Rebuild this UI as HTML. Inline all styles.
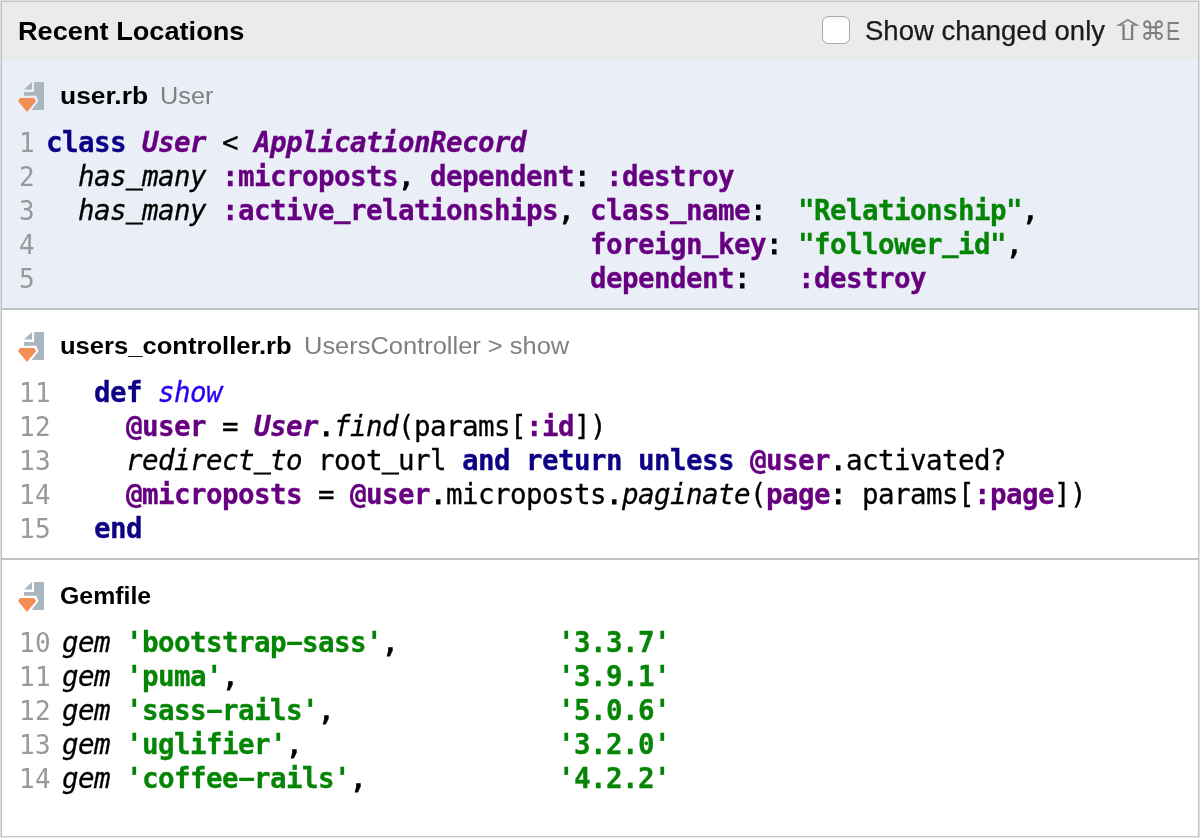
<!DOCTYPE html>
<html><head><meta charset="utf-8"><title>Recent Locations</title>
<style>
html,body{margin:0;padding:0;}
body{width:1200px;height:838px;position:relative;overflow:hidden;background:#dfdfdf;font-family:"Liberation Sans",sans-serif;}
#frame{position:absolute;left:1px;top:1px;width:1196px;height:834px;border:1px solid #c4c4c4;border-left-color:#bdbdbd;border-bottom-color:#c6c6c6;}
#ob{position:absolute;left:0;top:837px;width:1200px;height:1px;background:#ebebeb;}
#win{position:absolute;left:2px;top:2px;width:1196px;height:834px;background:#fff;overflow:hidden;}
#hdr{position:absolute;left:0;top:0;width:1196px;height:58px;background:#ebebeb;}
#title{position:absolute;left:16.0px;top:13.5px;transform:scaleX(1.045);transform-origin:0 0;font-weight:bold;font-size:26px;line-height:30px;color:#000;white-space:nowrap;}
#chk{position:absolute;left:820px;top:14px;width:28px;height:28px;box-sizing:border-box;border:1px solid #a9a9a9;border-radius:6.5px;background:linear-gradient(#f4f4f4,#fff 22%);}
#chklabel{position:absolute;left:862.6px;top:13.6px;transform:scaleX(1.0184);transform-origin:0 0;font-size:27px;line-height:30px;color:#1a1a1a;-webkit-text-stroke:0.25px #1a1a1a;white-space:nowrap;}
.sh{position:absolute;top:14px;font-size:26px;line-height:30px;color:#7e7e7e;white-space:nowrap;transform-origin:0 0;will-change:transform;}
.sec{position:absolute;left:0;width:1196px;}
#s1{top:58px;height:248px;background:#e9eef7;}
#s2{top:308px;height:248px;background:#fff;}
#s3{top:558px;height:276px;background:#fff;}
.sep{position:absolute;left:0;width:1196px;height:2px;background:#c0c0c0;}
.fn{position:absolute;left:57.5px;top:20.5px;transform-origin:0 0;font-size:23px;line-height:30px;white-space:nowrap;color:#000;font-weight:bold;}
.fg{font-weight:normal;color:#808080;}
.ico{position:absolute;left:12px;top:20px;width:32px;height:34px;}
pre,#title,#chklabel,#short,.fn{will-change:transform;}
pre{margin:0;position:absolute;left:17.4px;top:65.4px;font-family:"DejaVu Sans Mono","Liberation Mono",monospace;font-size:27.5px;letter-spacing:-0.5564px;line-height:34px;color:#000;white-space:pre;-webkit-text-stroke:0.3px;}
.ln{color:#999;margin-right:10.9px;font-size:26px;letter-spacing:0.3467px;line-height:0;-webkit-text-stroke:0;}
.k{color:#0c0085;font-weight:bold;}
.p{color:#670080;font-weight:bold;}
.pi{color:#670080;font-weight:bold;font-style:italic;}
.i{font-style:italic;}
.g{color:#058505;font-weight:bold;}
.d{color:#2800f5;font-style:italic;}
.q{-webkit-text-stroke:1.1px;}
.h{display:inline-block;line-height:0;transform:scale(1.7,0.78);transform-origin:50% 62%;}
.u{position:relative;top:-3px;}
.i .u,pre>.u{-webkit-text-stroke:0.9px;top:-3.5px;}
</style></head><body>
<div id="frame"></div><div id="ob"></div>
<div id="win">
<div id="hdr">
<div id="title">Recent Locations</div>
<div id="chk"></div>
<div id="chklabel">Show changed only</div>
<span class="sh" style="left:1105.8px;font-size:27.5px;transform:scaleX(1.69)">⇧</span><span class="sh" style="left:1137.6px;transform:scaleX(0.99)">⌘</span><span class="sh" style="left:1164.2px;transform:scaleX(0.82)">E</span>
</div>
<div class="sec" id="s1">
<svg class="ico" viewBox="0 0 32 34"><path d="M20.1 2H30V29.9H17.6L24.5 21.3L22.3 15.8H10V12.1H20.1Z" fill="#a9b5bf"/><path d="M18 2V9.6H10Z" fill="#a9b5bf"/><path d="M6 18H20L22.2 21L13 32L4 21Z" fill="#f48e57"/></svg>
<div class="fn" style="transform:scaleX(1.148)">user.rb</div><div class="fn fg" style="left:157.5px;transform:scaleX(1.10)">User</div>
<pre><span class="ln">1</span><span class="k">class</span> <span class="pi">User</span> &lt; <span class="pi">ApplicationRecord</span>
<span class="ln">2</span>  <span class="i">has<span class="u">_</span>many</span> <span class="p">:microposts</span><span class="q">,</span> <span class="p">dependent</span><span class="q">:</span> <span class="p">:destroy</span>
<span class="ln">3</span>  <span class="i">has<span class="u">_</span>many</span> <span class="p">:active<span class="u">_</span>relationships</span><span class="q">,</span> <span class="p">class<span class="u">_</span>name</span><span class="q">:</span>  <span class="g">"Relationship"</span><span class="q">,</span>
<span class="ln">4</span>                                  <span class="p">foreign<span class="u">_</span>key</span><span class="q">:</span> <span class="g">"follower<span class="u">_</span>id"</span><span class="q">,</span>
<span class="ln">5</span>                                  <span class="p">dependent</span><span class="q">:</span>   <span class="p">:destroy</span></pre>
</div>
<div class="sep" style="top:306px"></div>
<div class="sec" id="s2">
<svg class="ico" viewBox="0 0 32 34"><path d="M20.1 2H30V29.9H17.6L24.5 21.3L22.3 15.8H10V12.1H20.1Z" fill="#a9b5bf"/><path d="M18 2V9.6H10Z" fill="#a9b5bf"/><path d="M6 18H20L22.2 21L13 32L4 21Z" fill="#f48e57"/></svg>
<div class="fn" style="transform:scaleX(1.112)">users_controller.rb</div><div class="fn fg" style="left:301.5px;transform:scaleX(1.1066)">UsersController &gt; show</div>
<pre><span class="ln">11</span>  <span class="k">def</span> <span class="d">show</span>
<span class="ln">12</span>    <span class="p">@user</span> = <span class="pi">User</span><span class="q">.</span><span class="i">find</span>(params[<span class="p">:id</span>])
<span class="ln">13</span>    <span class="i">redirect<span class="u">_</span>to</span> root<span class="u">_</span>url <span class="k">and</span> <span class="k">return</span> <span class="k">unless</span> <span class="p">@user</span><span class="q">.</span>activated?
<span class="ln">14</span>    <span class="p">@microposts</span> = <span class="p">@user</span><span class="q">.</span>microposts<span class="q">.</span><span class="i">paginate</span>(<span class="p">page</span><span class="q">:</span> params[<span class="p">:page</span>])
<span class="ln">15</span>  <span class="k">end</span></pre>
</div>
<div class="sep" style="top:556px"></div>
<div class="sec" id="s3">
<svg class="ico" viewBox="0 0 32 34"><path d="M20.1 2H30V29.9H17.6L24.5 21.3L22.3 15.8H10V12.1H20.1Z" fill="#a9b5bf"/><path d="M18 2V9.6H10Z" fill="#a9b5bf"/><path d="M6 18H20L22.2 21L13 32L4 21Z" fill="#f48e57"/></svg>
<div class="fn" style="transform:scaleX(1.08)">Gemfile</div>
<pre><span class="ln">10</span><span class="i">gem</span> <span class="g">'bootstrap<span class="h">-</span>sass'</span><span class="q">,</span>          <span class="g">'3.3.7'</span>
<span class="ln">11</span><span class="i">gem</span> <span class="g">'puma'</span><span class="q">,</span>                    <span class="g">'3.9.1'</span>
<span class="ln">12</span><span class="i">gem</span> <span class="g">'sass<span class="h">-</span>rails'</span><span class="q">,</span>              <span class="g">'5.0.6'</span>
<span class="ln">13</span><span class="i">gem</span> <span class="g">'uglifier'</span><span class="q">,</span>                <span class="g">'3.2.0'</span>
<span class="ln">14</span><span class="i">gem</span> <span class="g">'coffee<span class="h">-</span>rails'</span><span class="q">,</span>            <span class="g">'4.2.2'</span></pre>
</div>
</div>
</body></html>
